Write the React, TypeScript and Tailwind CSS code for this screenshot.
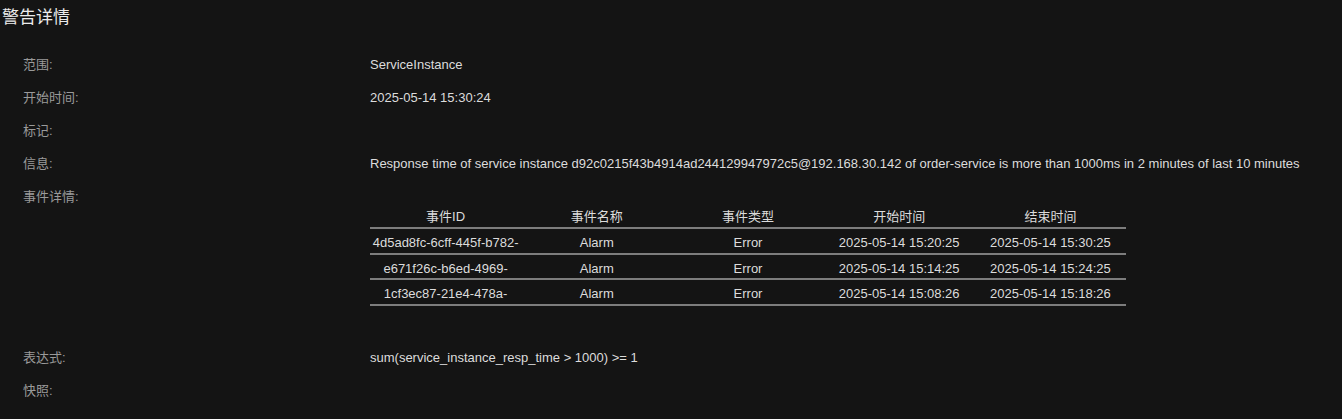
import React from "react";

const rows = [
  ["4d5ad8fc-6cff-445f-b782-", "Alarm", "Error", "2025-05-14 15:20:25", "2025-05-14 15:30:25"],
  ["e671f26c-b6ed-4969-", "Alarm", "Error", "2025-05-14 15:14:25", "2025-05-14 15:24:25"],
  ["1cf3ec87-21e4-478a-", "Alarm", "Error", "2025-05-14 15:08:26", "2025-05-14 15:18:26"],
];
const heads = ["事件ID", "事件名称", "事件类型", "开始时间", "结束时间"];

function Row({ label, children }: { label: string; children?: React.ReactNode }) {
  return (
    <div className="flex">
      <div className="w-[370px] pl-[23px] text-[#9a9a9a] h-[33px] leading-[33px] shrink-0">{label}:</div>
      <div className="text-[#dcdcdc] leading-[33px] min-h-[33px] whitespace-nowrap">{children}</div>
    </div>
  );
}

export default function App() {
  return (
    <div
      className="w-[1342px] h-[419px] bg-[#141414] text-[13px] overflow-hidden"
      style={{ fontFamily: '"Liberation Sans", "Noto Sans CJK SC", sans-serif' }}
    >
      <div className="h-[48px] pl-[2px] pt-[6px] text-[17px] leading-[24px] text-[#ececec]">警告详情</div>
      <Row label="范围">ServiceInstance</Row>
      <Row label="开始时间">2025-05-14 15:30:24</Row>
      <Row label="标记"></Row>
      <Row label="信息">
        Response time of service instance d92c0215f43b4914ad244129947972c5@192.168.30.142 of order-service is more than 1000ms in 2 minutes of last 10 minutes
      </Row>
      <div className="flex h-[161px]">
        <div className="w-[370px] pl-[23px] text-[#9a9a9a] h-[33px] leading-[33px] shrink-0">事件详情:</div>
        <div className="pt-[25px] w-[756px]">
          <div className="grid grid-cols-5 h-[24px] border-b-2 border-[#7d7d7d] text-[#dcdcdc]">
            {heads.map((h) => (
              <div key={h} className="text-center leading-[24px]">{h}</div>
            ))}
          </div>
          {rows.map((r, i) => (
            <div key={i} className="grid grid-cols-5 h-[25.5px] border-b-2 border-[#7d7d7d] text-[#dcdcdc]">
              {r.map((c, j) => (
                <div key={j} className="text-center leading-[27px] h-[23px] whitespace-nowrap">{c}</div>
              ))}
            </div>
          ))}
        </div>
      </div>
      <Row label="表达式">sum(service_instance_resp_time &gt; 1000) &gt;= 1</Row>
      <Row label="快照"></Row>
    </div>
  );
}
